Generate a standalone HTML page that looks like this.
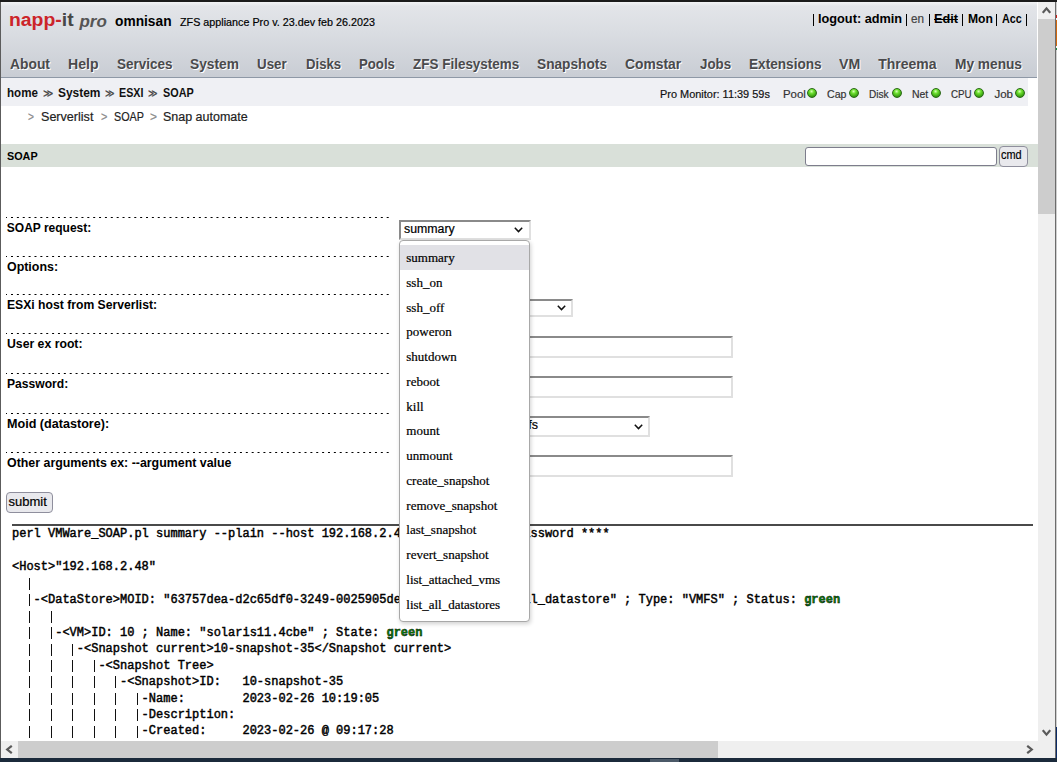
<!DOCTYPE html>
<html><head><meta charset="utf-8"><title>napp-it SOAP</title>
<style>
html,body{margin:0;padding:0;width:1057px;height:762px;overflow:hidden;background:#fff;}
body{position:relative;font-family:"Liberation Sans",sans-serif;}
b{font-weight:bold;}
</style></head><body>
<div style="position:absolute;left:0px;top:0px;width:1057px;height:2px;background:#1b1b1b"></div>
<div style="position:absolute;left:0px;top:2px;width:1px;height:756px;background:#5c5c5c"></div>
<div style="position:absolute;left:1055px;top:0px;width:1px;height:762px;background:#6c6c6c"></div>
<div style="position:absolute;left:1056px;top:0px;width:1px;height:762px;background:#cfcfcf"></div>
<div style="position:absolute;left:1055px;top:0px;width:2px;height:2px;background:#1b1b1b"></div>
<div style="position:absolute;left:1056px;top:15px;width:1px;height:3px;background:#c8201a"></div>
<div style="position:absolute;left:1056px;top:18px;width:1px;height:2px;background:#f4f4f4"></div>
<div style="position:absolute;left:1056px;top:20px;width:1px;height:26px;background:#d0680e"></div>
<div style="position:absolute;left:1056px;top:46px;width:1px;height:1.5px;background:#f4f4f4"></div>
<div style="position:absolute;left:1056px;top:47.5px;width:1px;height:2.5px;background:#1d8a3a"></div>
<div style="position:absolute;left:1056px;top:727px;width:1px;height:35px;background:#0b2a66"></div>
<div style="position:absolute;left:0px;top:758px;width:1057px;height:4px;background:#1b2a3b"></div>
<div style="position:absolute;left:650px;top:759px;width:29px;height:3px;background:#4b5968"></div>
<div style="position:absolute;left:1px;top:2px;width:1036px;height:75px;background:linear-gradient(#f2f3f5 0px,#e3e5e9 4px,#dadde2 30px,#c9cdd4 74px)"></div>
<div style="position:absolute;left:1px;top:77px;width:1036px;height:1px;background:#8e98a6"></div>
<div style="position:absolute;left:8.62px;top:9.26px;font-family:'Liberation Sans', sans-serif;font-size:18px;line-height:22px;font-weight:bold;color:#cc2429;white-space:pre;transform:scaleX(1.0764);transform-origin:0 0;">napp-<span style="color:#474747">it</span></div>
<div style="position:absolute;left:79.40px;top:11.61px;font-family:'Liberation Sans', sans-serif;font-size:17px;line-height:20px;font-weight:bold;color:#555;white-space:pre;font-style:italic;">pro</div>
<div style="position:absolute;left:114.60px;top:12.20px;font-family:'Liberation Sans', sans-serif;font-size:15px;line-height:18px;font-weight:bold;color:#000;white-space:pre;transform:scaleX(0.9169);transform-origin:0 0;">omnisan</div>
<div style="position:absolute;left:179.50px;top:15.22px;font-family:'Liberation Sans', sans-serif;font-size:11.5px;line-height:14px;font-weight:normal;color:#000;white-space:pre;transform:scaleX(0.9360);transform-origin:0 0;-webkit-text-stroke:0.2px #000;">ZFS appliance Pro v. 23.dev feb 26.2023</div>
<div style="position:absolute;left:813px;top:14px;width:1px;height:12px;background:#000"></div>
<div style="position:absolute;left:906px;top:14px;width:1px;height:12px;background:#000"></div>
<div style="position:absolute;left:929px;top:14px;width:1px;height:12px;background:#000"></div>
<div style="position:absolute;left:962px;top:14px;width:1px;height:12px;background:#000"></div>
<div style="position:absolute;left:996px;top:14px;width:1px;height:12px;background:#000"></div>
<div style="position:absolute;left:1026px;top:14px;width:1px;height:12px;background:#000"></div>
<div style="position:absolute;left:818.20px;top:12.37px;font-family:'Liberation Sans', sans-serif;font-size:12.5px;line-height:15px;font-weight:bold;color:#000;white-space:pre;transform:scaleX(1.0184);transform-origin:0 0;">logout: admin</div>
<div style="position:absolute;left:911.30px;top:12.37px;font-family:'Liberation Sans', sans-serif;font-size:12.5px;line-height:15px;font-weight:normal;color:#444;white-space:pre;transform:scaleX(0.9389);transform-origin:0 0;-webkit-text-stroke:0.2px #444;">en</div>
<div style="position:absolute;left:933.50px;top:12.37px;font-family:'Liberation Sans', sans-serif;font-size:12.5px;line-height:15px;font-weight:bold;color:#000;white-space:pre;transform:scaleX(1.0145);transform-origin:0 0;text-decoration:line-through;">Edit</div>
<div style="position:absolute;left:967.60px;top:12.37px;font-family:'Liberation Sans', sans-serif;font-size:12.5px;line-height:15px;font-weight:bold;color:#000;white-space:pre;transform:scaleX(0.9701);transform-origin:0 0;">Mon</div>
<div style="position:absolute;left:1001.60px;top:12.37px;font-family:'Liberation Sans', sans-serif;font-size:12.5px;line-height:15px;font-weight:bold;color:#000;white-space:pre;transform:scaleX(0.8617);transform-origin:0 0;">Acc</div>
<div style="position:absolute;left:9.70px;top:55.55px;font-family:'Liberation Sans', sans-serif;font-size:14px;line-height:17px;font-weight:bold;color:#4a4a4c;white-space:pre;transform:scaleX(0.9886);transform-origin:0 0;text-shadow:1px 1px 0 #fff;">About</div>
<div style="position:absolute;left:68.00px;top:55.55px;font-family:'Liberation Sans', sans-serif;font-size:14px;line-height:17px;font-weight:bold;color:#4a4a4c;white-space:pre;transform:scaleX(1.0072);transform-origin:0 0;text-shadow:1px 1px 0 #fff;">Help</div>
<div style="position:absolute;left:116.70px;top:55.55px;font-family:'Liberation Sans', sans-serif;font-size:14px;line-height:17px;font-weight:bold;color:#4a4a4c;white-space:pre;transform:scaleX(0.9633);transform-origin:0 0;text-shadow:1px 1px 0 #fff;">Services</div>
<div style="position:absolute;left:190.30px;top:55.55px;font-family:'Liberation Sans', sans-serif;font-size:14px;line-height:17px;font-weight:bold;color:#4a4a4c;white-space:pre;transform:scaleX(0.9826);transform-origin:0 0;text-shadow:1px 1px 0 #fff;">System</div>
<div style="position:absolute;left:257.40px;top:55.55px;font-family:'Liberation Sans', sans-serif;font-size:14px;line-height:17px;font-weight:bold;color:#4a4a4c;white-space:pre;transform:scaleX(0.9532);transform-origin:0 0;text-shadow:1px 1px 0 #fff;">User</div>
<div style="position:absolute;left:305.60px;top:55.55px;font-family:'Liberation Sans', sans-serif;font-size:14px;line-height:17px;font-weight:bold;color:#4a4a4c;white-space:pre;transform:scaleX(0.9395);transform-origin:0 0;text-shadow:1px 1px 0 #fff;">Disks</div>
<div style="position:absolute;left:359.10px;top:55.55px;font-family:'Liberation Sans', sans-serif;font-size:14px;line-height:17px;font-weight:bold;color:#4a4a4c;white-space:pre;transform:scaleX(0.9418);transform-origin:0 0;text-shadow:1px 1px 0 #fff;">Pools</div>
<div style="position:absolute;left:412.90px;top:55.55px;font-family:'Liberation Sans', sans-serif;font-size:14px;line-height:17px;font-weight:bold;color:#4a4a4c;white-space:pre;transform:scaleX(0.9620);transform-origin:0 0;text-shadow:1px 1px 0 #fff;">ZFS Filesystems</div>
<div style="position:absolute;left:537.20px;top:55.55px;font-family:'Liberation Sans', sans-serif;font-size:14px;line-height:17px;font-weight:bold;color:#4a4a4c;white-space:pre;transform:scaleX(0.9780);transform-origin:0 0;text-shadow:1px 1px 0 #fff;">Snapshots</div>
<div style="position:absolute;left:625.40px;top:55.55px;font-family:'Liberation Sans', sans-serif;font-size:14px;line-height:17px;font-weight:bold;color:#4a4a4c;white-space:pre;transform:scaleX(0.9888);transform-origin:0 0;text-shadow:1px 1px 0 #fff;">Comstar</div>
<div style="position:absolute;left:700.10px;top:55.55px;font-family:'Liberation Sans', sans-serif;font-size:14px;line-height:17px;font-weight:bold;color:#4a4a4c;white-space:pre;transform:scaleX(0.9517);transform-origin:0 0;text-shadow:1px 1px 0 #fff;">Jobs</div>
<div style="position:absolute;left:749.40px;top:55.55px;font-family:'Liberation Sans', sans-serif;font-size:14px;line-height:17px;font-weight:bold;color:#4a4a4c;white-space:pre;transform:scaleX(0.9733);transform-origin:0 0;text-shadow:1px 1px 0 #fff;">Extensions</div>
<div style="position:absolute;left:839.30px;top:55.55px;font-family:'Liberation Sans', sans-serif;font-size:14px;line-height:17px;font-weight:bold;color:#4a4a4c;white-space:pre;transform:scaleX(1.0080);transform-origin:0 0;text-shadow:1px 1px 0 #fff;">VM</div>
<div style="position:absolute;left:878.20px;top:55.55px;font-family:'Liberation Sans', sans-serif;font-size:14px;line-height:17px;font-weight:bold;color:#4a4a4c;white-space:pre;text-shadow:1px 1px 0 #fff;">Threema</div>
<div style="position:absolute;left:955.20px;top:55.55px;font-family:'Liberation Sans', sans-serif;font-size:14px;line-height:17px;font-weight:bold;color:#4a4a4c;white-space:pre;transform:scaleX(0.9785);transform-origin:0 0;text-shadow:1px 1px 0 #fff;">My menus</div>
<div style="position:absolute;left:1px;top:78px;width:1027px;height:28px;background:#eff0f4"></div>
<div style="position:absolute;left:6.90px;top:85.54px;font-family:'Liberation Sans', sans-serif;font-size:12px;line-height:14px;font-weight:bold;color:#111;white-space:pre;transform:scaleX(0.9650);transform-origin:0 0;">home</div>
<div style="position:absolute;left:57.80px;top:85.54px;font-family:'Liberation Sans', sans-serif;font-size:12px;line-height:14px;font-weight:bold;color:#111;white-space:pre;transform:scaleX(0.9947);transform-origin:0 0;">System</div>
<div style="position:absolute;left:119.30px;top:85.54px;font-family:'Liberation Sans', sans-serif;font-size:12px;line-height:14px;font-weight:bold;color:#111;white-space:pre;transform:scaleX(0.8922);transform-origin:0 0;">ESXI</div>
<div style="position:absolute;left:162.90px;top:85.54px;font-family:'Liberation Sans', sans-serif;font-size:12px;line-height:14px;font-weight:bold;color:#111;white-space:pre;transform:scaleX(0.9028);transform-origin:0 0;">SOAP</div>
<div style="position:absolute;left:43.00px;top:86.99px;font-family:'Liberation Sans', sans-serif;font-size:11px;line-height:13px;font-weight:normal;color:#444;white-space:pre;transform:scaleX(0.9000);transform-origin:0 0;-webkit-text-stroke:0.2px #444;">&#8811;</div>
<div style="position:absolute;left:104.50px;top:86.99px;font-family:'Liberation Sans', sans-serif;font-size:11px;line-height:13px;font-weight:normal;color:#444;white-space:pre;transform:scaleX(0.8273);transform-origin:0 0;-webkit-text-stroke:0.2px #444;">&#8811;</div>
<div style="position:absolute;left:148.30px;top:86.99px;font-family:'Liberation Sans', sans-serif;font-size:11px;line-height:13px;font-weight:normal;color:#444;white-space:pre;transform:scaleX(0.8273);transform-origin:0 0;-webkit-text-stroke:0.2px #444;">&#8811;</div>
<div style="position:absolute;left:660.40px;top:87.02px;font-family:'Liberation Sans', sans-serif;font-size:11.5px;line-height:14px;font-weight:normal;color:#111;white-space:pre;transform:scaleX(0.9513);transform-origin:0 0;-webkit-text-stroke:0.2px #111;">Pro Monitor: 11:39 59s</div>
<div style="position:absolute;left:782.50px;top:87.02px;font-family:'Liberation Sans', sans-serif;font-size:11.5px;line-height:14px;font-weight:normal;color:#333;white-space:pre;transform:scaleX(0.9928);transform-origin:0 0;-webkit-text-stroke:0.2px #333;">Pool</div>
<div style="position:absolute;left:807px;top:88px;width:10px;height:10px;box-sizing:border-box;border:0.5px solid #2c6a18;border-radius:50%;background:radial-gradient(circle at 45% 30%,#d8ffb8 0,#6ee030 30%,#3aa012 70%,#226a0a 100%);"></div>
<div style="position:absolute;left:826.90px;top:87.02px;font-family:'Liberation Sans', sans-serif;font-size:11.5px;line-height:14px;font-weight:normal;color:#333;white-space:pre;transform:scaleX(0.9227);transform-origin:0 0;-webkit-text-stroke:0.2px #333;">Cap</div>
<div style="position:absolute;left:848.7px;top:88px;width:10px;height:10px;box-sizing:border-box;border:0.5px solid #2c6a18;border-radius:50%;background:radial-gradient(circle at 45% 30%,#d8ffb8 0,#6ee030 30%,#3aa012 70%,#226a0a 100%);"></div>
<div style="position:absolute;left:868.90px;top:87.02px;font-family:'Liberation Sans', sans-serif;font-size:11.5px;line-height:14px;font-weight:normal;color:#333;white-space:pre;transform:scaleX(0.8757);transform-origin:0 0;-webkit-text-stroke:0.2px #333;">Disk</div>
<div style="position:absolute;left:891.8px;top:88px;width:10px;height:10px;box-sizing:border-box;border:0.5px solid #2c6a18;border-radius:50%;background:radial-gradient(circle at 45% 30%,#d8ffb8 0,#6ee030 30%,#3aa012 70%,#226a0a 100%);"></div>
<div style="position:absolute;left:911.60px;top:87.02px;font-family:'Liberation Sans', sans-serif;font-size:11.5px;line-height:14px;font-weight:normal;color:#333;white-space:pre;transform:scaleX(0.9091);transform-origin:0 0;-webkit-text-stroke:0.2px #333;">Net</div>
<div style="position:absolute;left:930.9px;top:88px;width:10px;height:10px;box-sizing:border-box;border:0.5px solid #2c6a18;border-radius:50%;background:radial-gradient(circle at 45% 30%,#d8ffb8 0,#6ee030 30%,#3aa012 70%,#226a0a 100%);"></div>
<div style="position:absolute;left:951.10px;top:87.02px;font-family:'Liberation Sans', sans-serif;font-size:11.5px;line-height:14px;font-weight:normal;color:#333;white-space:pre;transform:scaleX(0.8509);transform-origin:0 0;-webkit-text-stroke:0.2px #333;">CPU</div>
<div style="position:absolute;left:974.4px;top:88px;width:10px;height:10px;box-sizing:border-box;border:0.5px solid #2c6a18;border-radius:50%;background:radial-gradient(circle at 45% 30%,#d8ffb8 0,#6ee030 30%,#3aa012 70%,#226a0a 100%);"></div>
<div style="position:absolute;left:994.40px;top:87.02px;font-family:'Liberation Sans', sans-serif;font-size:11.5px;line-height:14px;font-weight:normal;color:#333;white-space:pre;-webkit-text-stroke:0.2px #333;">Job</div>
<div style="position:absolute;left:1015px;top:88px;width:10px;height:10px;box-sizing:border-box;border:0.5px solid #2c6a18;border-radius:50%;background:radial-gradient(circle at 45% 30%,#d8ffb8 0,#6ee030 30%,#3aa012 70%,#226a0a 100%);"></div>
<div style="position:absolute;left:28.30px;top:109.57px;font-family:'Liberation Sans', sans-serif;font-size:12.5px;line-height:15px;font-weight:normal;color:#8a8a8a;white-space:pre;transform:scaleX(0.8143);transform-origin:0 0;-webkit-text-stroke:0.2px #8a8a8a;">&gt;</div>
<div style="position:absolute;left:100.90px;top:109.57px;font-family:'Liberation Sans', sans-serif;font-size:12.5px;line-height:15px;font-weight:normal;color:#8a8a8a;white-space:pre;transform:scaleX(0.8714);transform-origin:0 0;-webkit-text-stroke:0.2px #8a8a8a;">&gt;</div>
<div style="position:absolute;left:150.00px;top:109.57px;font-family:'Liberation Sans', sans-serif;font-size:12.5px;line-height:15px;font-weight:normal;color:#8a8a8a;white-space:pre;transform:scaleX(0.9571);transform-origin:0 0;-webkit-text-stroke:0.2px #8a8a8a;">&gt;</div>
<div style="position:absolute;left:41.30px;top:109.57px;font-family:'Liberation Sans', sans-serif;font-size:12.5px;line-height:15px;font-weight:normal;color:#222;white-space:pre;transform:scaleX(1.0053);transform-origin:0 0;-webkit-text-stroke:0.2px #222;">Serverlist</div>
<div style="position:absolute;left:113.70px;top:109.57px;font-family:'Liberation Sans', sans-serif;font-size:12.5px;line-height:15px;font-weight:normal;color:#222;white-space:pre;transform:scaleX(0.8634);transform-origin:0 0;-webkit-text-stroke:0.2px #222;">SOAP</div>
<div style="position:absolute;left:162.90px;top:109.57px;font-family:'Liberation Sans', sans-serif;font-size:12.5px;line-height:15px;font-weight:normal;color:#222;white-space:pre;-webkit-text-stroke:0.2px #222;">Snap automate</div>
<div style="position:absolute;left:1px;top:144px;width:1037px;height:23px;background:#d9e0d9"></div>
<div style="position:absolute;left:6.60px;top:148.82px;font-family:'Liberation Sans', sans-serif;font-size:11.5px;line-height:14px;font-weight:bold;color:#000;white-space:pre;transform:scaleX(0.9386);transform-origin:0 0;">SOAP</div>
<div style="position:absolute;left:805px;top:147px;width:192px;height:19px;box-sizing:border-box;background:#fff;border:1px solid #7d7d8c;border-radius:3px;"></div>
<div style="position:absolute;left:999px;top:146px;width:29px;height:21px;box-sizing:border-box;background:#e9e9ed;border:1px solid #8f8f9d;border-radius:4px;"></div>
<div style="position:absolute;left:1001.40px;top:146.52px;font-family:'Liberation Sans', sans-serif;font-size:13.5px;line-height:16px;font-weight:normal;color:#000;white-space:pre;transform:scaleX(0.8081);transform-origin:0 0;-webkit-text-stroke:0.2px #000;">cmd</div>
<svg style="position:absolute;left:6px;top:217px" width="384" height="1"><rect x="0.00" y="0" width="1" height="1"/><rect x="5.00" y="0" width="2" height="1"/><rect x="10.87" y="0" width="2" height="1"/><rect x="16.74" y="0" width="2" height="1"/><rect x="22.61" y="0" width="2" height="1"/><rect x="28.48" y="0" width="2" height="1"/><rect x="34.35" y="0" width="2" height="1"/><rect x="40.22" y="0" width="2" height="1"/><rect x="46.09" y="0" width="2" height="1"/><rect x="51.96" y="0" width="2" height="1"/><rect x="57.83" y="0" width="2" height="1"/><rect x="63.70" y="0" width="2" height="1"/><rect x="69.57" y="0" width="2" height="1"/><rect x="75.44" y="0" width="2" height="1"/><rect x="81.31" y="0" width="2" height="1"/><rect x="87.18" y="0" width="2" height="1"/><rect x="93.05" y="0" width="2" height="1"/><rect x="98.92" y="0" width="2" height="1"/><rect x="104.79" y="0" width="2" height="1"/><rect x="110.66" y="0" width="2" height="1"/><rect x="116.53" y="0" width="2" height="1"/><rect x="122.40" y="0" width="2" height="1"/><rect x="128.27" y="0" width="2" height="1"/><rect x="134.14" y="0" width="2" height="1"/><rect x="140.01" y="0" width="2" height="1"/><rect x="145.88" y="0" width="2" height="1"/><rect x="151.75" y="0" width="2" height="1"/><rect x="157.62" y="0" width="2" height="1"/><rect x="163.49" y="0" width="2" height="1"/><rect x="169.36" y="0" width="2" height="1"/><rect x="175.23" y="0" width="2" height="1"/><rect x="181.10" y="0" width="2" height="1"/><rect x="186.97" y="0" width="2" height="1"/><rect x="192.84" y="0" width="2" height="1"/><rect x="198.71" y="0" width="2" height="1"/><rect x="204.58" y="0" width="2" height="1"/><rect x="210.45" y="0" width="2" height="1"/><rect x="216.32" y="0" width="2" height="1"/><rect x="222.19" y="0" width="2" height="1"/><rect x="228.06" y="0" width="2" height="1"/><rect x="233.93" y="0" width="2" height="1"/><rect x="239.80" y="0" width="2" height="1"/><rect x="245.67" y="0" width="2" height="1"/><rect x="251.54" y="0" width="2" height="1"/><rect x="257.41" y="0" width="2" height="1"/><rect x="263.28" y="0" width="2" height="1"/><rect x="269.15" y="0" width="2" height="1"/><rect x="275.02" y="0" width="2" height="1"/><rect x="280.89" y="0" width="2" height="1"/><rect x="286.76" y="0" width="2" height="1"/><rect x="292.63" y="0" width="2" height="1"/><rect x="298.50" y="0" width="2" height="1"/><rect x="304.37" y="0" width="2" height="1"/><rect x="310.24" y="0" width="2" height="1"/><rect x="316.11" y="0" width="2" height="1"/><rect x="321.98" y="0" width="2" height="1"/><rect x="327.85" y="0" width="2" height="1"/><rect x="333.72" y="0" width="2" height="1"/><rect x="339.59" y="0" width="2" height="1"/><rect x="345.46" y="0" width="2" height="1"/><rect x="351.33" y="0" width="2" height="1"/><rect x="357.20" y="0" width="2" height="1"/><rect x="363.07" y="0" width="2" height="1"/><rect x="368.94" y="0" width="2" height="1"/><rect x="374.81" y="0" width="2" height="1"/><rect x="380.68" y="0" width="2" height="1"/></svg>
<svg style="position:absolute;left:6px;top:256px" width="384" height="1"><rect x="0.00" y="0" width="1" height="1"/><rect x="5.00" y="0" width="2" height="1"/><rect x="10.87" y="0" width="2" height="1"/><rect x="16.74" y="0" width="2" height="1"/><rect x="22.61" y="0" width="2" height="1"/><rect x="28.48" y="0" width="2" height="1"/><rect x="34.35" y="0" width="2" height="1"/><rect x="40.22" y="0" width="2" height="1"/><rect x="46.09" y="0" width="2" height="1"/><rect x="51.96" y="0" width="2" height="1"/><rect x="57.83" y="0" width="2" height="1"/><rect x="63.70" y="0" width="2" height="1"/><rect x="69.57" y="0" width="2" height="1"/><rect x="75.44" y="0" width="2" height="1"/><rect x="81.31" y="0" width="2" height="1"/><rect x="87.18" y="0" width="2" height="1"/><rect x="93.05" y="0" width="2" height="1"/><rect x="98.92" y="0" width="2" height="1"/><rect x="104.79" y="0" width="2" height="1"/><rect x="110.66" y="0" width="2" height="1"/><rect x="116.53" y="0" width="2" height="1"/><rect x="122.40" y="0" width="2" height="1"/><rect x="128.27" y="0" width="2" height="1"/><rect x="134.14" y="0" width="2" height="1"/><rect x="140.01" y="0" width="2" height="1"/><rect x="145.88" y="0" width="2" height="1"/><rect x="151.75" y="0" width="2" height="1"/><rect x="157.62" y="0" width="2" height="1"/><rect x="163.49" y="0" width="2" height="1"/><rect x="169.36" y="0" width="2" height="1"/><rect x="175.23" y="0" width="2" height="1"/><rect x="181.10" y="0" width="2" height="1"/><rect x="186.97" y="0" width="2" height="1"/><rect x="192.84" y="0" width="2" height="1"/><rect x="198.71" y="0" width="2" height="1"/><rect x="204.58" y="0" width="2" height="1"/><rect x="210.45" y="0" width="2" height="1"/><rect x="216.32" y="0" width="2" height="1"/><rect x="222.19" y="0" width="2" height="1"/><rect x="228.06" y="0" width="2" height="1"/><rect x="233.93" y="0" width="2" height="1"/><rect x="239.80" y="0" width="2" height="1"/><rect x="245.67" y="0" width="2" height="1"/><rect x="251.54" y="0" width="2" height="1"/><rect x="257.41" y="0" width="2" height="1"/><rect x="263.28" y="0" width="2" height="1"/><rect x="269.15" y="0" width="2" height="1"/><rect x="275.02" y="0" width="2" height="1"/><rect x="280.89" y="0" width="2" height="1"/><rect x="286.76" y="0" width="2" height="1"/><rect x="292.63" y="0" width="2" height="1"/><rect x="298.50" y="0" width="2" height="1"/><rect x="304.37" y="0" width="2" height="1"/><rect x="310.24" y="0" width="2" height="1"/><rect x="316.11" y="0" width="2" height="1"/><rect x="321.98" y="0" width="2" height="1"/><rect x="327.85" y="0" width="2" height="1"/><rect x="333.72" y="0" width="2" height="1"/><rect x="339.59" y="0" width="2" height="1"/><rect x="345.46" y="0" width="2" height="1"/><rect x="351.33" y="0" width="2" height="1"/><rect x="357.20" y="0" width="2" height="1"/><rect x="363.07" y="0" width="2" height="1"/><rect x="368.94" y="0" width="2" height="1"/><rect x="374.81" y="0" width="2" height="1"/><rect x="380.68" y="0" width="2" height="1"/></svg>
<svg style="position:absolute;left:6px;top:294px" width="384" height="1"><rect x="0.00" y="0" width="1" height="1"/><rect x="5.00" y="0" width="2" height="1"/><rect x="10.87" y="0" width="2" height="1"/><rect x="16.74" y="0" width="2" height="1"/><rect x="22.61" y="0" width="2" height="1"/><rect x="28.48" y="0" width="2" height="1"/><rect x="34.35" y="0" width="2" height="1"/><rect x="40.22" y="0" width="2" height="1"/><rect x="46.09" y="0" width="2" height="1"/><rect x="51.96" y="0" width="2" height="1"/><rect x="57.83" y="0" width="2" height="1"/><rect x="63.70" y="0" width="2" height="1"/><rect x="69.57" y="0" width="2" height="1"/><rect x="75.44" y="0" width="2" height="1"/><rect x="81.31" y="0" width="2" height="1"/><rect x="87.18" y="0" width="2" height="1"/><rect x="93.05" y="0" width="2" height="1"/><rect x="98.92" y="0" width="2" height="1"/><rect x="104.79" y="0" width="2" height="1"/><rect x="110.66" y="0" width="2" height="1"/><rect x="116.53" y="0" width="2" height="1"/><rect x="122.40" y="0" width="2" height="1"/><rect x="128.27" y="0" width="2" height="1"/><rect x="134.14" y="0" width="2" height="1"/><rect x="140.01" y="0" width="2" height="1"/><rect x="145.88" y="0" width="2" height="1"/><rect x="151.75" y="0" width="2" height="1"/><rect x="157.62" y="0" width="2" height="1"/><rect x="163.49" y="0" width="2" height="1"/><rect x="169.36" y="0" width="2" height="1"/><rect x="175.23" y="0" width="2" height="1"/><rect x="181.10" y="0" width="2" height="1"/><rect x="186.97" y="0" width="2" height="1"/><rect x="192.84" y="0" width="2" height="1"/><rect x="198.71" y="0" width="2" height="1"/><rect x="204.58" y="0" width="2" height="1"/><rect x="210.45" y="0" width="2" height="1"/><rect x="216.32" y="0" width="2" height="1"/><rect x="222.19" y="0" width="2" height="1"/><rect x="228.06" y="0" width="2" height="1"/><rect x="233.93" y="0" width="2" height="1"/><rect x="239.80" y="0" width="2" height="1"/><rect x="245.67" y="0" width="2" height="1"/><rect x="251.54" y="0" width="2" height="1"/><rect x="257.41" y="0" width="2" height="1"/><rect x="263.28" y="0" width="2" height="1"/><rect x="269.15" y="0" width="2" height="1"/><rect x="275.02" y="0" width="2" height="1"/><rect x="280.89" y="0" width="2" height="1"/><rect x="286.76" y="0" width="2" height="1"/><rect x="292.63" y="0" width="2" height="1"/><rect x="298.50" y="0" width="2" height="1"/><rect x="304.37" y="0" width="2" height="1"/><rect x="310.24" y="0" width="2" height="1"/><rect x="316.11" y="0" width="2" height="1"/><rect x="321.98" y="0" width="2" height="1"/><rect x="327.85" y="0" width="2" height="1"/><rect x="333.72" y="0" width="2" height="1"/><rect x="339.59" y="0" width="2" height="1"/><rect x="345.46" y="0" width="2" height="1"/><rect x="351.33" y="0" width="2" height="1"/><rect x="357.20" y="0" width="2" height="1"/><rect x="363.07" y="0" width="2" height="1"/><rect x="368.94" y="0" width="2" height="1"/><rect x="374.81" y="0" width="2" height="1"/><rect x="380.68" y="0" width="2" height="1"/></svg>
<svg style="position:absolute;left:6px;top:333px" width="384" height="1"><rect x="0.00" y="0" width="1" height="1"/><rect x="5.00" y="0" width="2" height="1"/><rect x="10.87" y="0" width="2" height="1"/><rect x="16.74" y="0" width="2" height="1"/><rect x="22.61" y="0" width="2" height="1"/><rect x="28.48" y="0" width="2" height="1"/><rect x="34.35" y="0" width="2" height="1"/><rect x="40.22" y="0" width="2" height="1"/><rect x="46.09" y="0" width="2" height="1"/><rect x="51.96" y="0" width="2" height="1"/><rect x="57.83" y="0" width="2" height="1"/><rect x="63.70" y="0" width="2" height="1"/><rect x="69.57" y="0" width="2" height="1"/><rect x="75.44" y="0" width="2" height="1"/><rect x="81.31" y="0" width="2" height="1"/><rect x="87.18" y="0" width="2" height="1"/><rect x="93.05" y="0" width="2" height="1"/><rect x="98.92" y="0" width="2" height="1"/><rect x="104.79" y="0" width="2" height="1"/><rect x="110.66" y="0" width="2" height="1"/><rect x="116.53" y="0" width="2" height="1"/><rect x="122.40" y="0" width="2" height="1"/><rect x="128.27" y="0" width="2" height="1"/><rect x="134.14" y="0" width="2" height="1"/><rect x="140.01" y="0" width="2" height="1"/><rect x="145.88" y="0" width="2" height="1"/><rect x="151.75" y="0" width="2" height="1"/><rect x="157.62" y="0" width="2" height="1"/><rect x="163.49" y="0" width="2" height="1"/><rect x="169.36" y="0" width="2" height="1"/><rect x="175.23" y="0" width="2" height="1"/><rect x="181.10" y="0" width="2" height="1"/><rect x="186.97" y="0" width="2" height="1"/><rect x="192.84" y="0" width="2" height="1"/><rect x="198.71" y="0" width="2" height="1"/><rect x="204.58" y="0" width="2" height="1"/><rect x="210.45" y="0" width="2" height="1"/><rect x="216.32" y="0" width="2" height="1"/><rect x="222.19" y="0" width="2" height="1"/><rect x="228.06" y="0" width="2" height="1"/><rect x="233.93" y="0" width="2" height="1"/><rect x="239.80" y="0" width="2" height="1"/><rect x="245.67" y="0" width="2" height="1"/><rect x="251.54" y="0" width="2" height="1"/><rect x="257.41" y="0" width="2" height="1"/><rect x="263.28" y="0" width="2" height="1"/><rect x="269.15" y="0" width="2" height="1"/><rect x="275.02" y="0" width="2" height="1"/><rect x="280.89" y="0" width="2" height="1"/><rect x="286.76" y="0" width="2" height="1"/><rect x="292.63" y="0" width="2" height="1"/><rect x="298.50" y="0" width="2" height="1"/><rect x="304.37" y="0" width="2" height="1"/><rect x="310.24" y="0" width="2" height="1"/><rect x="316.11" y="0" width="2" height="1"/><rect x="321.98" y="0" width="2" height="1"/><rect x="327.85" y="0" width="2" height="1"/><rect x="333.72" y="0" width="2" height="1"/><rect x="339.59" y="0" width="2" height="1"/><rect x="345.46" y="0" width="2" height="1"/><rect x="351.33" y="0" width="2" height="1"/><rect x="357.20" y="0" width="2" height="1"/><rect x="363.07" y="0" width="2" height="1"/><rect x="368.94" y="0" width="2" height="1"/><rect x="374.81" y="0" width="2" height="1"/><rect x="380.68" y="0" width="2" height="1"/></svg>
<svg style="position:absolute;left:6px;top:373px" width="384" height="1"><rect x="0.00" y="0" width="1" height="1"/><rect x="5.00" y="0" width="2" height="1"/><rect x="10.87" y="0" width="2" height="1"/><rect x="16.74" y="0" width="2" height="1"/><rect x="22.61" y="0" width="2" height="1"/><rect x="28.48" y="0" width="2" height="1"/><rect x="34.35" y="0" width="2" height="1"/><rect x="40.22" y="0" width="2" height="1"/><rect x="46.09" y="0" width="2" height="1"/><rect x="51.96" y="0" width="2" height="1"/><rect x="57.83" y="0" width="2" height="1"/><rect x="63.70" y="0" width="2" height="1"/><rect x="69.57" y="0" width="2" height="1"/><rect x="75.44" y="0" width="2" height="1"/><rect x="81.31" y="0" width="2" height="1"/><rect x="87.18" y="0" width="2" height="1"/><rect x="93.05" y="0" width="2" height="1"/><rect x="98.92" y="0" width="2" height="1"/><rect x="104.79" y="0" width="2" height="1"/><rect x="110.66" y="0" width="2" height="1"/><rect x="116.53" y="0" width="2" height="1"/><rect x="122.40" y="0" width="2" height="1"/><rect x="128.27" y="0" width="2" height="1"/><rect x="134.14" y="0" width="2" height="1"/><rect x="140.01" y="0" width="2" height="1"/><rect x="145.88" y="0" width="2" height="1"/><rect x="151.75" y="0" width="2" height="1"/><rect x="157.62" y="0" width="2" height="1"/><rect x="163.49" y="0" width="2" height="1"/><rect x="169.36" y="0" width="2" height="1"/><rect x="175.23" y="0" width="2" height="1"/><rect x="181.10" y="0" width="2" height="1"/><rect x="186.97" y="0" width="2" height="1"/><rect x="192.84" y="0" width="2" height="1"/><rect x="198.71" y="0" width="2" height="1"/><rect x="204.58" y="0" width="2" height="1"/><rect x="210.45" y="0" width="2" height="1"/><rect x="216.32" y="0" width="2" height="1"/><rect x="222.19" y="0" width="2" height="1"/><rect x="228.06" y="0" width="2" height="1"/><rect x="233.93" y="0" width="2" height="1"/><rect x="239.80" y="0" width="2" height="1"/><rect x="245.67" y="0" width="2" height="1"/><rect x="251.54" y="0" width="2" height="1"/><rect x="257.41" y="0" width="2" height="1"/><rect x="263.28" y="0" width="2" height="1"/><rect x="269.15" y="0" width="2" height="1"/><rect x="275.02" y="0" width="2" height="1"/><rect x="280.89" y="0" width="2" height="1"/><rect x="286.76" y="0" width="2" height="1"/><rect x="292.63" y="0" width="2" height="1"/><rect x="298.50" y="0" width="2" height="1"/><rect x="304.37" y="0" width="2" height="1"/><rect x="310.24" y="0" width="2" height="1"/><rect x="316.11" y="0" width="2" height="1"/><rect x="321.98" y="0" width="2" height="1"/><rect x="327.85" y="0" width="2" height="1"/><rect x="333.72" y="0" width="2" height="1"/><rect x="339.59" y="0" width="2" height="1"/><rect x="345.46" y="0" width="2" height="1"/><rect x="351.33" y="0" width="2" height="1"/><rect x="357.20" y="0" width="2" height="1"/><rect x="363.07" y="0" width="2" height="1"/><rect x="368.94" y="0" width="2" height="1"/><rect x="374.81" y="0" width="2" height="1"/><rect x="380.68" y="0" width="2" height="1"/></svg>
<svg style="position:absolute;left:6px;top:413px" width="384" height="1"><rect x="0.00" y="0" width="1" height="1"/><rect x="5.00" y="0" width="2" height="1"/><rect x="10.87" y="0" width="2" height="1"/><rect x="16.74" y="0" width="2" height="1"/><rect x="22.61" y="0" width="2" height="1"/><rect x="28.48" y="0" width="2" height="1"/><rect x="34.35" y="0" width="2" height="1"/><rect x="40.22" y="0" width="2" height="1"/><rect x="46.09" y="0" width="2" height="1"/><rect x="51.96" y="0" width="2" height="1"/><rect x="57.83" y="0" width="2" height="1"/><rect x="63.70" y="0" width="2" height="1"/><rect x="69.57" y="0" width="2" height="1"/><rect x="75.44" y="0" width="2" height="1"/><rect x="81.31" y="0" width="2" height="1"/><rect x="87.18" y="0" width="2" height="1"/><rect x="93.05" y="0" width="2" height="1"/><rect x="98.92" y="0" width="2" height="1"/><rect x="104.79" y="0" width="2" height="1"/><rect x="110.66" y="0" width="2" height="1"/><rect x="116.53" y="0" width="2" height="1"/><rect x="122.40" y="0" width="2" height="1"/><rect x="128.27" y="0" width="2" height="1"/><rect x="134.14" y="0" width="2" height="1"/><rect x="140.01" y="0" width="2" height="1"/><rect x="145.88" y="0" width="2" height="1"/><rect x="151.75" y="0" width="2" height="1"/><rect x="157.62" y="0" width="2" height="1"/><rect x="163.49" y="0" width="2" height="1"/><rect x="169.36" y="0" width="2" height="1"/><rect x="175.23" y="0" width="2" height="1"/><rect x="181.10" y="0" width="2" height="1"/><rect x="186.97" y="0" width="2" height="1"/><rect x="192.84" y="0" width="2" height="1"/><rect x="198.71" y="0" width="2" height="1"/><rect x="204.58" y="0" width="2" height="1"/><rect x="210.45" y="0" width="2" height="1"/><rect x="216.32" y="0" width="2" height="1"/><rect x="222.19" y="0" width="2" height="1"/><rect x="228.06" y="0" width="2" height="1"/><rect x="233.93" y="0" width="2" height="1"/><rect x="239.80" y="0" width="2" height="1"/><rect x="245.67" y="0" width="2" height="1"/><rect x="251.54" y="0" width="2" height="1"/><rect x="257.41" y="0" width="2" height="1"/><rect x="263.28" y="0" width="2" height="1"/><rect x="269.15" y="0" width="2" height="1"/><rect x="275.02" y="0" width="2" height="1"/><rect x="280.89" y="0" width="2" height="1"/><rect x="286.76" y="0" width="2" height="1"/><rect x="292.63" y="0" width="2" height="1"/><rect x="298.50" y="0" width="2" height="1"/><rect x="304.37" y="0" width="2" height="1"/><rect x="310.24" y="0" width="2" height="1"/><rect x="316.11" y="0" width="2" height="1"/><rect x="321.98" y="0" width="2" height="1"/><rect x="327.85" y="0" width="2" height="1"/><rect x="333.72" y="0" width="2" height="1"/><rect x="339.59" y="0" width="2" height="1"/><rect x="345.46" y="0" width="2" height="1"/><rect x="351.33" y="0" width="2" height="1"/><rect x="357.20" y="0" width="2" height="1"/><rect x="363.07" y="0" width="2" height="1"/><rect x="368.94" y="0" width="2" height="1"/><rect x="374.81" y="0" width="2" height="1"/><rect x="380.68" y="0" width="2" height="1"/></svg>
<svg style="position:absolute;left:6px;top:452px" width="384" height="1"><rect x="0.00" y="0" width="1" height="1"/><rect x="5.00" y="0" width="2" height="1"/><rect x="10.87" y="0" width="2" height="1"/><rect x="16.74" y="0" width="2" height="1"/><rect x="22.61" y="0" width="2" height="1"/><rect x="28.48" y="0" width="2" height="1"/><rect x="34.35" y="0" width="2" height="1"/><rect x="40.22" y="0" width="2" height="1"/><rect x="46.09" y="0" width="2" height="1"/><rect x="51.96" y="0" width="2" height="1"/><rect x="57.83" y="0" width="2" height="1"/><rect x="63.70" y="0" width="2" height="1"/><rect x="69.57" y="0" width="2" height="1"/><rect x="75.44" y="0" width="2" height="1"/><rect x="81.31" y="0" width="2" height="1"/><rect x="87.18" y="0" width="2" height="1"/><rect x="93.05" y="0" width="2" height="1"/><rect x="98.92" y="0" width="2" height="1"/><rect x="104.79" y="0" width="2" height="1"/><rect x="110.66" y="0" width="2" height="1"/><rect x="116.53" y="0" width="2" height="1"/><rect x="122.40" y="0" width="2" height="1"/><rect x="128.27" y="0" width="2" height="1"/><rect x="134.14" y="0" width="2" height="1"/><rect x="140.01" y="0" width="2" height="1"/><rect x="145.88" y="0" width="2" height="1"/><rect x="151.75" y="0" width="2" height="1"/><rect x="157.62" y="0" width="2" height="1"/><rect x="163.49" y="0" width="2" height="1"/><rect x="169.36" y="0" width="2" height="1"/><rect x="175.23" y="0" width="2" height="1"/><rect x="181.10" y="0" width="2" height="1"/><rect x="186.97" y="0" width="2" height="1"/><rect x="192.84" y="0" width="2" height="1"/><rect x="198.71" y="0" width="2" height="1"/><rect x="204.58" y="0" width="2" height="1"/><rect x="210.45" y="0" width="2" height="1"/><rect x="216.32" y="0" width="2" height="1"/><rect x="222.19" y="0" width="2" height="1"/><rect x="228.06" y="0" width="2" height="1"/><rect x="233.93" y="0" width="2" height="1"/><rect x="239.80" y="0" width="2" height="1"/><rect x="245.67" y="0" width="2" height="1"/><rect x="251.54" y="0" width="2" height="1"/><rect x="257.41" y="0" width="2" height="1"/><rect x="263.28" y="0" width="2" height="1"/><rect x="269.15" y="0" width="2" height="1"/><rect x="275.02" y="0" width="2" height="1"/><rect x="280.89" y="0" width="2" height="1"/><rect x="286.76" y="0" width="2" height="1"/><rect x="292.63" y="0" width="2" height="1"/><rect x="298.50" y="0" width="2" height="1"/><rect x="304.37" y="0" width="2" height="1"/><rect x="310.24" y="0" width="2" height="1"/><rect x="316.11" y="0" width="2" height="1"/><rect x="321.98" y="0" width="2" height="1"/><rect x="327.85" y="0" width="2" height="1"/><rect x="333.72" y="0" width="2" height="1"/><rect x="339.59" y="0" width="2" height="1"/><rect x="345.46" y="0" width="2" height="1"/><rect x="351.33" y="0" width="2" height="1"/><rect x="357.20" y="0" width="2" height="1"/><rect x="363.07" y="0" width="2" height="1"/><rect x="368.94" y="0" width="2" height="1"/><rect x="374.81" y="0" width="2" height="1"/><rect x="380.68" y="0" width="2" height="1"/></svg>
<div style="position:absolute;left:6.80px;top:220.84px;font-family:'Liberation Sans', sans-serif;font-size:12px;line-height:14px;font-weight:bold;color:#000;white-space:pre;">SOAP request:</div>
<div style="position:absolute;left:6.80px;top:259.64px;font-family:'Liberation Sans', sans-serif;font-size:12px;line-height:14px;font-weight:bold;color:#000;white-space:pre;transform:scaleX(1.0346);transform-origin:0 0;">Options:</div>
<div style="position:absolute;left:6.80px;top:297.94px;font-family:'Liberation Sans', sans-serif;font-size:12px;line-height:14px;font-weight:bold;color:#000;white-space:pre;transform:scaleX(1.0140);transform-origin:0 0;">ESXi host from Serverlist:</div>
<div style="position:absolute;left:6.80px;top:337.04px;font-family:'Liberation Sans', sans-serif;font-size:12px;line-height:14px;font-weight:bold;color:#000;white-space:pre;transform:scaleX(1.0202);transform-origin:0 0;">User ex root:</div>
<div style="position:absolute;left:6.80px;top:377.44px;font-family:'Liberation Sans', sans-serif;font-size:12px;line-height:14px;font-weight:bold;color:#000;white-space:pre;transform:scaleX(1.0086);transform-origin:0 0;">Password:</div>
<div style="position:absolute;left:6.80px;top:416.84px;font-family:'Liberation Sans', sans-serif;font-size:12px;line-height:14px;font-weight:bold;color:#000;white-space:pre;transform:scaleX(1.0495);transform-origin:0 0;">Moid (datastore):</div>
<div style="position:absolute;left:6.80px;top:455.74px;font-family:'Liberation Sans', sans-serif;font-size:12px;line-height:14px;font-weight:bold;color:#000;white-space:pre;transform:scaleX(1.0326);transform-origin:0 0;">Other arguments ex: --argument value</div>
<div style="position:absolute;left:399px;top:220px;width:132px;height:20px;box-sizing:border-box;background:#fff;border-style:solid;border-width:2px;border-color:#8a8a8a #e0e0e0 #e0e0e0 #8a8a8a;"></div>
<div style="position:absolute;left:403.50px;top:221.57px;font-family:'Liberation Sans', sans-serif;font-size:12.5px;line-height:15px;font-weight:normal;color:#000;white-space:pre;transform:scaleX(0.9877);transform-origin:0 0;-webkit-text-stroke:0.2px #000;">summary</div>
<svg style="position:absolute;left:514px;top:227px" width="9" height="6" viewBox="0 0 9 6"><path d="M0.8 0.8 L4.5 4.6 L8.2 0.8" fill="none" stroke="#111" stroke-width="1.5"/></svg>
<div style="position:absolute;left:399px;top:299px;width:174px;height:18px;box-sizing:border-box;background:#fff;border-style:solid;border-width:2px;border-color:#8a8a8a #e0e0e0 #e0e0e0 #8a8a8a;"></div>
<svg style="position:absolute;left:557px;top:305px" width="9" height="6" viewBox="0 0 9 6"><path d="M0.8 0.8 L4.5 4.6 L8.2 0.8" fill="none" stroke="#111" stroke-width="1.5"/></svg>
<div style="position:absolute;left:399px;top:336px;width:334px;height:22px;box-sizing:border-box;background:#fff;border-style:solid;border-width:2px;border-color:#8a8a8a #e0e0e0 #e0e0e0 #8a8a8a;"></div>
<div style="position:absolute;left:399px;top:376px;width:334px;height:22px;box-sizing:border-box;background:#fff;border-style:solid;border-width:2px;border-color:#8a8a8a #e0e0e0 #e0e0e0 #8a8a8a;"></div>
<div style="position:absolute;left:399px;top:416px;width:251px;height:21px;box-sizing:border-box;background:#fff;border-style:solid;border-width:2px;border-color:#8a8a8a #e0e0e0 #e0e0e0 #8a8a8a;"></div>
<div style="position:absolute;left:511.50px;top:417.97px;font-family:'Liberation Sans', sans-serif;font-size:12.5px;line-height:15px;font-weight:normal;color:#000;white-space:pre;-webkit-text-stroke:0.2px #000;">vmfs</div>
<svg style="position:absolute;left:634px;top:423.5px" width="9" height="6" viewBox="0 0 9 6"><path d="M0.8 0.8 L4.5 4.6 L8.2 0.8" fill="none" stroke="#111" stroke-width="1.5"/></svg>
<div style="position:absolute;left:399px;top:455px;width:334px;height:22px;box-sizing:border-box;background:#fff;border-style:solid;border-width:2px;border-color:#8a8a8a #e0e0e0 #e0e0e0 #8a8a8a;"></div>
<div style="position:absolute;left:6px;top:492px;width:47px;height:21px;box-sizing:border-box;background:#e9e9ed;border:1px solid #8f8f9d;border-radius:4px;"></div>
<div style="position:absolute;left:8.50px;top:493.80px;font-family:'Liberation Sans', sans-serif;font-size:13px;line-height:16px;font-weight:normal;color:#000;white-space:pre;-webkit-text-stroke:0.2px #000;">submit</div>
<div style="position:absolute;left:12px;top:524px;width:1021px;height:2px;background:#4a4a4a"></div>
<div style="position:absolute;left:12.00px;top:527.20px;font-family:'Liberation Mono', monospace;font-size:12px;line-height:14px;font-weight:normal;color:#000;white-space:pre;-webkit-text-stroke:0.45px #000;">perl VMWare_SOAP.pl summary --plain --host 192.168.2.48 --user root --password ****</div>
<div style="position:absolute;left:12.00px;top:560.06px;font-family:'Liberation Mono', monospace;font-size:12px;line-height:14px;font-weight:normal;color:#000;white-space:pre;-webkit-text-stroke:0.45px #000;">&lt;Host&gt;"192.168.2.48"</div>
<div style="position:absolute;left:29px;top:578px;width:1px;height:12px;background:#111"></div>
<div style="position:absolute;left:12.00px;top:576.49px;font-family:'Liberation Mono', monospace;font-size:12px;line-height:14px;font-weight:normal;color:#000;white-space:pre;-webkit-text-stroke:0.45px #000;">   </div>
<div style="position:absolute;left:29px;top:594px;width:1px;height:12px;background:#111"></div>
<div style="position:absolute;left:12.00px;top:592.92px;font-family:'Liberation Mono', monospace;font-size:12px;line-height:14px;font-weight:normal;color:#000;white-space:pre;-webkit-text-stroke:0.45px #000;">   -&lt;DataStore&gt;MOID: "63757dea-d2c65df0-3249-0025905de9f4" ; Name: "local_datastore" ; Type: "VMFS" ; Status: <b style="color:#0a8a0a">green</b></div>
<div style="position:absolute;left:29px;top:611px;width:1px;height:12px;background:#111"></div>
<div style="position:absolute;left:51px;top:611px;width:1px;height:12px;background:#111"></div>
<div style="position:absolute;left:12.00px;top:609.35px;font-family:'Liberation Mono', monospace;font-size:12px;line-height:14px;font-weight:normal;color:#000;white-space:pre;-webkit-text-stroke:0.45px #000;">      </div>
<div style="position:absolute;left:29px;top:627px;width:1px;height:12px;background:#111"></div>
<div style="position:absolute;left:51px;top:627px;width:1px;height:12px;background:#111"></div>
<div style="position:absolute;left:12.00px;top:625.78px;font-family:'Liberation Mono', monospace;font-size:12px;line-height:14px;font-weight:normal;color:#000;white-space:pre;-webkit-text-stroke:0.45px #000;">      -&lt;VM&gt;ID: 10 ; Name: "solaris11.4cbe" ; State: <b style="color:#0a8a0a">green</b></div>
<div style="position:absolute;left:29px;top:644px;width:1px;height:12px;background:#111"></div>
<div style="position:absolute;left:51px;top:644px;width:1px;height:12px;background:#111"></div>
<div style="position:absolute;left:72px;top:644px;width:1px;height:12px;background:#111"></div>
<div style="position:absolute;left:12.00px;top:642.21px;font-family:'Liberation Mono', monospace;font-size:12px;line-height:14px;font-weight:normal;color:#000;white-space:pre;-webkit-text-stroke:0.45px #000;">         -&lt;Snapshot current&gt;10-snapshot-35&lt;/Snapshot current&gt;</div>
<div style="position:absolute;left:29px;top:660px;width:1px;height:12px;background:#111"></div>
<div style="position:absolute;left:51px;top:660px;width:1px;height:12px;background:#111"></div>
<div style="position:absolute;left:72px;top:660px;width:1px;height:12px;background:#111"></div>
<div style="position:absolute;left:94px;top:660px;width:1px;height:12px;background:#111"></div>
<div style="position:absolute;left:12.00px;top:658.64px;font-family:'Liberation Mono', monospace;font-size:12px;line-height:14px;font-weight:normal;color:#000;white-space:pre;-webkit-text-stroke:0.45px #000;">            -&lt;Snapshot Tree&gt;</div>
<div style="position:absolute;left:29px;top:676px;width:1px;height:12px;background:#111"></div>
<div style="position:absolute;left:51px;top:676px;width:1px;height:12px;background:#111"></div>
<div style="position:absolute;left:72px;top:676px;width:1px;height:12px;background:#111"></div>
<div style="position:absolute;left:94px;top:676px;width:1px;height:12px;background:#111"></div>
<div style="position:absolute;left:115px;top:676px;width:1px;height:12px;background:#111"></div>
<div style="position:absolute;left:12.00px;top:675.07px;font-family:'Liberation Mono', monospace;font-size:12px;line-height:14px;font-weight:normal;color:#000;white-space:pre;-webkit-text-stroke:0.45px #000;">               -&lt;Snapshot&gt;ID:   10-snapshot-35</div>
<div style="position:absolute;left:29px;top:693px;width:1px;height:12px;background:#111"></div>
<div style="position:absolute;left:51px;top:693px;width:1px;height:12px;background:#111"></div>
<div style="position:absolute;left:72px;top:693px;width:1px;height:12px;background:#111"></div>
<div style="position:absolute;left:94px;top:693px;width:1px;height:12px;background:#111"></div>
<div style="position:absolute;left:115px;top:693px;width:1px;height:12px;background:#111"></div>
<div style="position:absolute;left:137px;top:693px;width:1px;height:12px;background:#111"></div>
<div style="position:absolute;left:12.00px;top:691.50px;font-family:'Liberation Mono', monospace;font-size:12px;line-height:14px;font-weight:normal;color:#000;white-space:pre;-webkit-text-stroke:0.45px #000;">                  -Name:        2023-02-26 10:19:05</div>
<div style="position:absolute;left:29px;top:709px;width:1px;height:12px;background:#111"></div>
<div style="position:absolute;left:51px;top:709px;width:1px;height:12px;background:#111"></div>
<div style="position:absolute;left:72px;top:709px;width:1px;height:12px;background:#111"></div>
<div style="position:absolute;left:94px;top:709px;width:1px;height:12px;background:#111"></div>
<div style="position:absolute;left:115px;top:709px;width:1px;height:12px;background:#111"></div>
<div style="position:absolute;left:137px;top:709px;width:1px;height:12px;background:#111"></div>
<div style="position:absolute;left:12.00px;top:707.93px;font-family:'Liberation Mono', monospace;font-size:12px;line-height:14px;font-weight:normal;color:#000;white-space:pre;-webkit-text-stroke:0.45px #000;">                  -Description:</div>
<div style="position:absolute;left:29px;top:726px;width:1px;height:12px;background:#111"></div>
<div style="position:absolute;left:51px;top:726px;width:1px;height:12px;background:#111"></div>
<div style="position:absolute;left:72px;top:726px;width:1px;height:12px;background:#111"></div>
<div style="position:absolute;left:94px;top:726px;width:1px;height:12px;background:#111"></div>
<div style="position:absolute;left:115px;top:726px;width:1px;height:12px;background:#111"></div>
<div style="position:absolute;left:137px;top:726px;width:1px;height:12px;background:#111"></div>
<div style="position:absolute;left:12.00px;top:724.36px;font-family:'Liberation Mono', monospace;font-size:12px;line-height:14px;font-weight:normal;color:#000;white-space:pre;-webkit-text-stroke:0.45px #000;">                  -Created:     2023-02-26 @ 09:17:28</div>
<div style="position:absolute;left:399px;top:240px;width:131px;height:382px;box-sizing:border-box;background:#fff;border:1px solid #a8a8a8;border-radius:4px;box-shadow:1px 2px 4px rgba(0,0,0,0.18);"></div>
<div style="position:absolute;left:400px;top:245px;width:129px;height:25px;background:#e1e1e6"></div>
<div style="position:absolute;left:406.30px;top:250.21px;font-family:'Liberation Serif', serif;font-size:13px;line-height:16px;font-weight:normal;color:#000;white-space:pre;-webkit-text-stroke:0.2px #000;">summary</div>
<div style="position:absolute;left:406.30px;top:274.95px;font-family:'Liberation Serif', serif;font-size:13px;line-height:16px;font-weight:normal;color:#000;white-space:pre;-webkit-text-stroke:0.2px #000;">ssh_on</div>
<div style="position:absolute;left:406.30px;top:299.69px;font-family:'Liberation Serif', serif;font-size:13px;line-height:16px;font-weight:normal;color:#000;white-space:pre;-webkit-text-stroke:0.2px #000;">ssh_off</div>
<div style="position:absolute;left:406.30px;top:324.43px;font-family:'Liberation Serif', serif;font-size:13px;line-height:16px;font-weight:normal;color:#000;white-space:pre;-webkit-text-stroke:0.2px #000;">poweron</div>
<div style="position:absolute;left:406.30px;top:349.17px;font-family:'Liberation Serif', serif;font-size:13px;line-height:16px;font-weight:normal;color:#000;white-space:pre;-webkit-text-stroke:0.2px #000;">shutdown</div>
<div style="position:absolute;left:406.30px;top:373.91px;font-family:'Liberation Serif', serif;font-size:13px;line-height:16px;font-weight:normal;color:#000;white-space:pre;-webkit-text-stroke:0.2px #000;">reboot</div>
<div style="position:absolute;left:406.30px;top:398.65px;font-family:'Liberation Serif', serif;font-size:13px;line-height:16px;font-weight:normal;color:#000;white-space:pre;-webkit-text-stroke:0.2px #000;">kill</div>
<div style="position:absolute;left:406.30px;top:423.39px;font-family:'Liberation Serif', serif;font-size:13px;line-height:16px;font-weight:normal;color:#000;white-space:pre;-webkit-text-stroke:0.2px #000;">mount</div>
<div style="position:absolute;left:406.30px;top:448.13px;font-family:'Liberation Serif', serif;font-size:13px;line-height:16px;font-weight:normal;color:#000;white-space:pre;-webkit-text-stroke:0.2px #000;">unmount</div>
<div style="position:absolute;left:406.30px;top:472.87px;font-family:'Liberation Serif', serif;font-size:13px;line-height:16px;font-weight:normal;color:#000;white-space:pre;-webkit-text-stroke:0.2px #000;">create_snapshot</div>
<div style="position:absolute;left:406.30px;top:497.61px;font-family:'Liberation Serif', serif;font-size:13px;line-height:16px;font-weight:normal;color:#000;white-space:pre;-webkit-text-stroke:0.2px #000;">remove_snapshot</div>
<div style="position:absolute;left:406.30px;top:522.35px;font-family:'Liberation Serif', serif;font-size:13px;line-height:16px;font-weight:normal;color:#000;white-space:pre;-webkit-text-stroke:0.2px #000;">last_snapshot</div>
<div style="position:absolute;left:406.30px;top:547.09px;font-family:'Liberation Serif', serif;font-size:13px;line-height:16px;font-weight:normal;color:#000;white-space:pre;-webkit-text-stroke:0.2px #000;">revert_snapshot</div>
<div style="position:absolute;left:406.30px;top:571.83px;font-family:'Liberation Serif', serif;font-size:13px;line-height:16px;font-weight:normal;color:#000;white-space:pre;-webkit-text-stroke:0.2px #000;">list_attached_vms</div>
<div style="position:absolute;left:406.30px;top:596.57px;font-family:'Liberation Serif', serif;font-size:13px;line-height:16px;font-weight:normal;color:#000;white-space:pre;-webkit-text-stroke:0.2px #000;">list_all_datastores</div>
<div style="position:absolute;left:1038px;top:2px;width:17px;height:739px;background:#efefef"></div>
<div style="position:absolute;left:1038px;top:19px;width:17px;height:195px;background:#cdcdcd"></div>
<div style="position:absolute;left:1px;top:741px;width:1037px;height:17px;background:#efefef"></div>
<div style="position:absolute;left:18px;top:741px;width:700px;height:17px;background:#cdcdcd"></div>
<div style="position:absolute;left:1038px;top:741px;width:17px;height:17px;background:#efefef"></div>
<svg style="position:absolute;left:1042px;top:6px" width="9" height="8" viewBox="0 0 9 8"><path d="M0.8 6.8 L4.5 2.4 L8.2 6.8" fill="none" stroke="#5a5a5a" stroke-width="2.2"/></svg>
<svg style="position:absolute;left:1042px;top:729px" width="9" height="8" viewBox="0 0 9 8"><path d="M0.8 1.2 L4.5 5.6 L8.2 1.2" fill="none" stroke="#5a5a5a" stroke-width="2.2"/></svg>
<svg style="position:absolute;left:5px;top:745px" width="8" height="9" viewBox="0 0 8 9"><path d="M6.8 0.8 L2.2 4.5 L6.8 8.2" fill="none" stroke="#5a5a5a" stroke-width="2.2"/></svg>
<svg style="position:absolute;left:1026px;top:745px" width="8" height="9" viewBox="0 0 8 9"><path d="M1.2 0.8 L5.8 4.5 L1.2 8.2" fill="none" stroke="#5a5a5a" stroke-width="2.2"/></svg>
</body></html>
